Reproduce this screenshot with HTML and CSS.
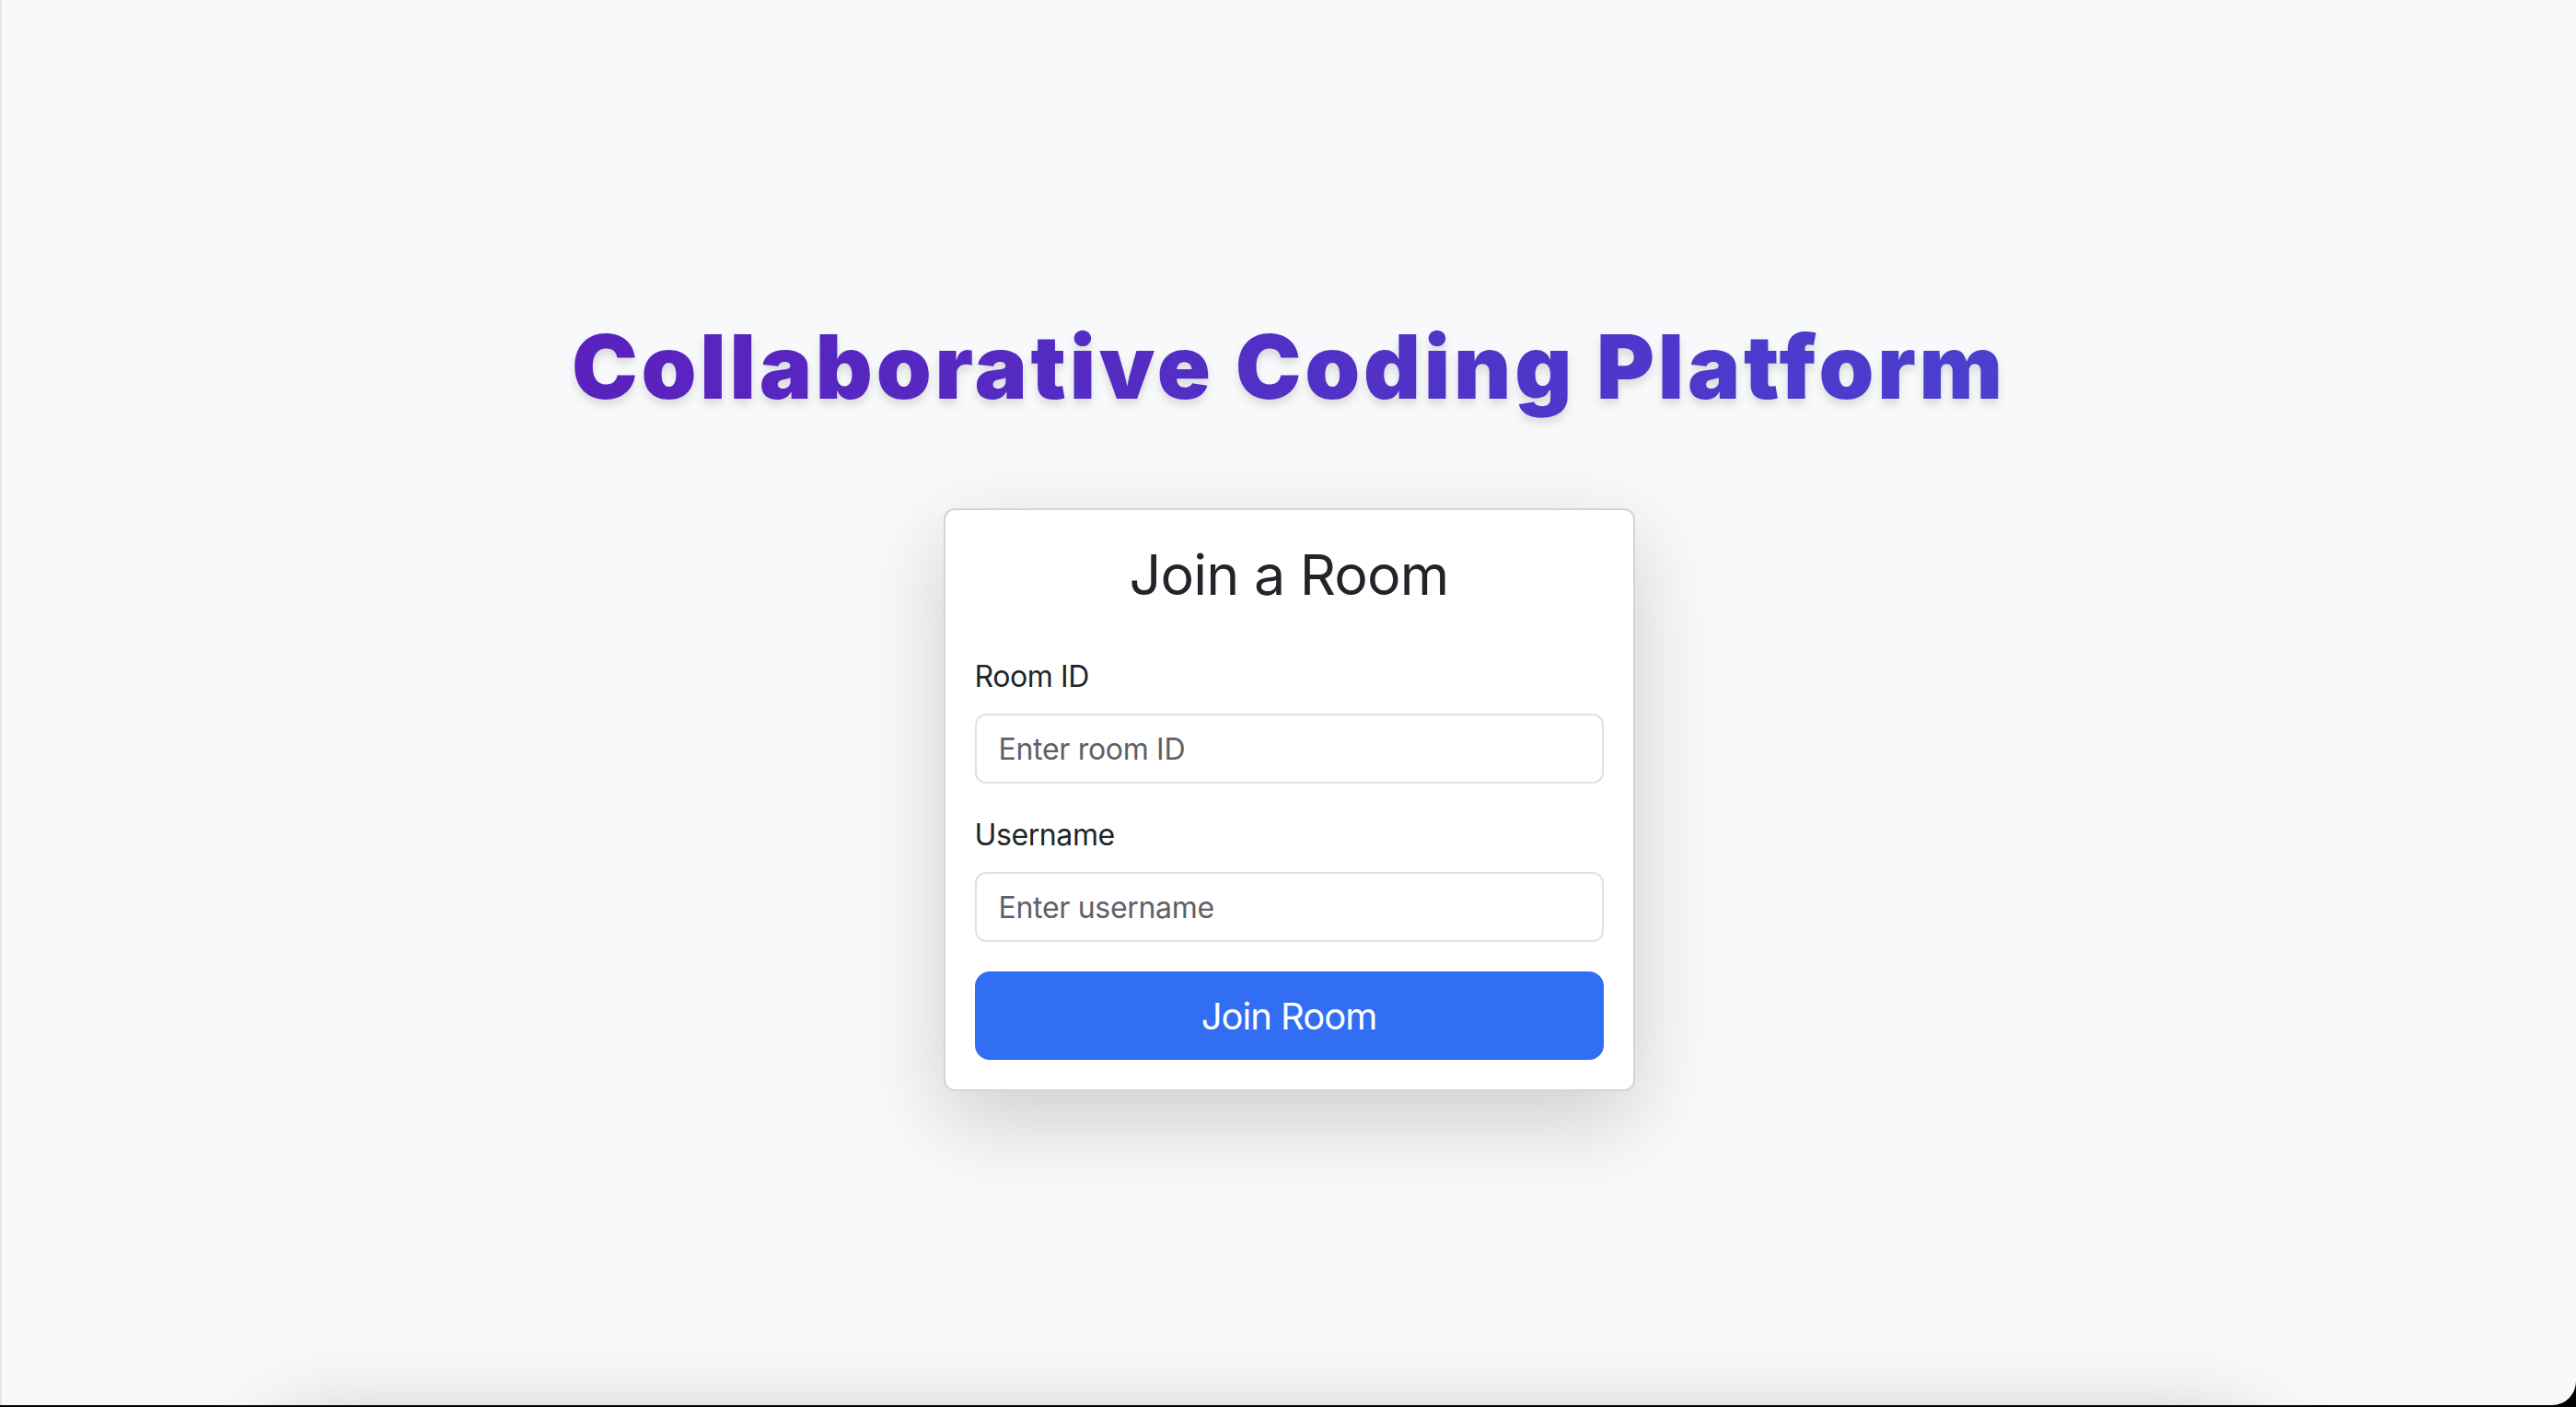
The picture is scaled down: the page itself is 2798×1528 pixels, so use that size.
FILE: index.html
```html
<!DOCTYPE html>
<html lang="en">
<head>
<meta charset="utf-8">
<title>Collaborative Coding Platform</title>
<link rel="stylesheet" href="styles.css">
</head>
<body>
<div class="window">
  <main class="hero">
    <h1 class="brand">Collaborative Coding Platform</h1>
    <div class="card">
      <h2 class="card-title">Join a Room</h2>
      <div class="field">
        <label class="label" for="room">Room ID</label>
        <input class="input" id="room" type="text" placeholder="Enter room ID">
      </div>
      <div class="field">
        <label class="label" for="user">Username</label>
        <input class="input" id="user" type="text" placeholder="Enter username">
      </div>
      <button class="btn" type="button">Join Room</button>
    </div>
  </main>
  <section class="below"></section>
</div>
</body>
</html>
```

FILE: styles.css
```css
html {
  background: #000;
  margin: 0;
}
body {
  margin: 0;
  font-family: Inter, "Liberation Sans", sans-serif;
  color: #212529;
}
.window {
  height: 1526px;
  background: #f8f9fa;
  border-left: 2px solid #e4e5e7;
  border-bottom-right-radius: 26px;
  overflow: hidden;
}
.hero {
  height: 1526px;
  display: flex;
  flex-direction: column;
  align-items: center;
  justify-content: center;
}
.brand {
  margin: 0 0 96px;
  font-family: Inter, "Liberation Sans", sans-serif;
  font-weight: 900;
  font-size: 96px;
  line-height: 1.2;
  letter-spacing: 3.8px;
  background: linear-gradient(90deg, #5a21bd 0%, #4a3fcf 100%);
  -webkit-background-clip: text;
  background-clip: text;
  color: transparent;
  -webkit-text-fill-color: transparent;
  filter: drop-shadow(0 6px 5px rgba(0, 0, 0, 0.12));
}
.card {
  width: 751px;
  box-sizing: border-box;
  background: #fff;
  border: 2px solid #d5d5d6;
  border-radius: 12px;
  padding: 32px;
  box-shadow: 0 32px 96px rgba(0, 0, 0, 0.175);
  display: flex;
  flex-direction: column;
}
.card-title {
  margin: 0 0 48px;
  text-align: center;
  font-size: 61px;
  font-weight: 400;
  letter-spacing: -0.8px;
  line-height: 77px;
  color: #212529;
}
.field {
  display: flex;
  flex-direction: column;
  margin-bottom: 32px;
}
.label {
  font-size: 32px;
  line-height: 48px;
  letter-spacing: -0.4px;
  margin-bottom: 16px;
  color: #212529;
}
.input {
  height: 76px;
  box-sizing: border-box;
  border: 2px solid #dee2e6;
  border-radius: 12px;
  padding: 12px 24px;
  font-family: Inter, "Liberation Sans", sans-serif;
  font-size: 32px;
  letter-spacing: -0.3px;
  color: #212529;
  background: #fff;
  outline: none;
}
.input::placeholder {
  color: #5d6166;
}
.btn {
  height: 96px;
  border: 0;
  border-radius: 16px;
  background: #316ef4;
  color: #fff;
  font-family: Inter, "Liberation Sans", sans-serif;
  font-size: 40px;
  letter-spacing: -1px;
  font-weight: 400;
}
.below {
  width: 2140px;
  height: 400px;
  margin: 0 0 0 300px;
  background: #f8f9fa;
  box-shadow: 0 32px 96px rgba(0, 0, 0, 0.3);
}
```
